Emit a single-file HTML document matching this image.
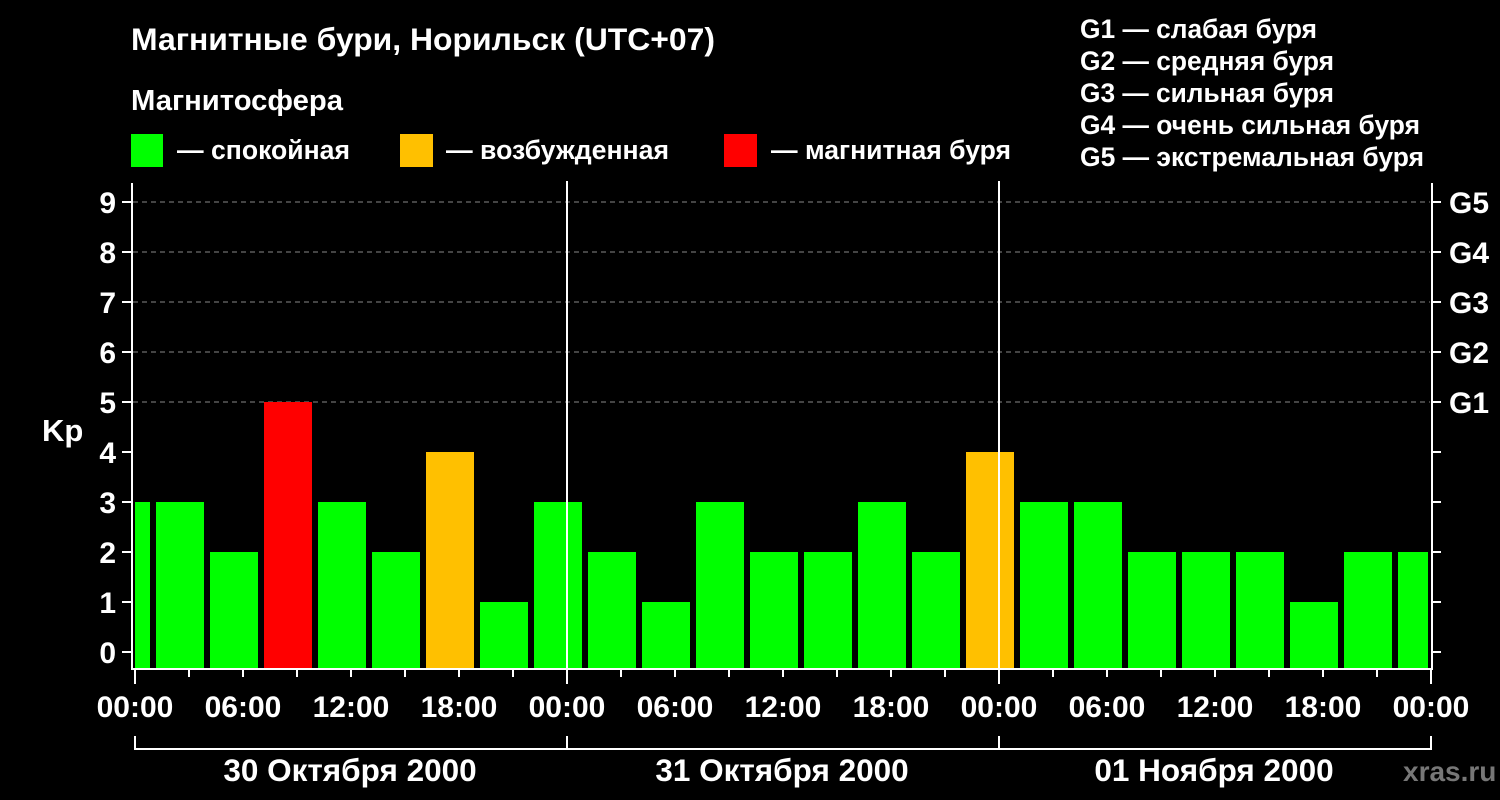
<!DOCTYPE html><html><head><meta charset="utf-8"><style>body{margin:0;background:#000}svg{display:block}text{font-family:"Liberation Sans",Arial,sans-serif;font-weight:bold;fill:#fff}</style></head><body>
<svg width="1500" height="800" xmlns="http://www.w3.org/2000/svg">
<rect width="1500" height="800" fill="#000"/>
<text x="131" y="50" font-size="31.5" textLength="584" lengthAdjust="spacingAndGlyphs">Магнитные бури, Норильск (UTC+07)</text>
<text x="131" y="110" font-size="29" textLength="212" lengthAdjust="spacingAndGlyphs">Магнитосфера</text>
<rect x="131" y="134" width="32" height="33" fill="#0f0"/><text x="177" y="159" font-size="26.5" textLength="173" lengthAdjust="spacingAndGlyphs">— спокойная</text>
<rect x="400" y="134" width="33" height="33" fill="#ffc000"/><text x="446" y="159" font-size="26.5" textLength="223" lengthAdjust="spacingAndGlyphs">— возбужденная</text>
<rect x="724" y="134" width="33" height="33" fill="#f00"/><text x="771" y="159" font-size="26.5" textLength="240" lengthAdjust="spacingAndGlyphs">— магнитная буря</text>
<g font-size="26.5"><text x="1080" y="38" textLength="237" lengthAdjust="spacingAndGlyphs">G1 — слабая буря</text><text x="1080" y="70" textLength="254" lengthAdjust="spacingAndGlyphs">G2 — средняя буря</text><text x="1080" y="102" textLength="254" lengthAdjust="spacingAndGlyphs">G3 — сильная буря</text><text x="1080" y="134" textLength="340" lengthAdjust="spacingAndGlyphs">G4 — очень сильная буря</text><text x="1080" y="166" textLength="344" lengthAdjust="spacingAndGlyphs">G5 — экстремальная буря</text></g>
<g stroke="#888" stroke-dasharray="5,4" stroke-width="1"><line x1="133" x2="1430" y1="202" y2="202"/><line x1="133" x2="1430" y1="252" y2="252"/><line x1="133" x2="1430" y1="302" y2="302"/><line x1="133" x2="1430" y1="352" y2="352"/><line x1="133" x2="1430" y1="402" y2="402"/></g>
<g fill="#0f0">
<rect x="135" y="502" width="15" height="166"/>
<rect x="156" y="502" width="48" height="166"/>
<rect x="210" y="552" width="48" height="116"/>
<rect x="264" y="402" width="48" height="266" fill="#f00"/>
<rect x="318" y="502" width="48" height="166"/>
<rect x="372" y="552" width="48" height="116"/>
<rect x="426" y="452" width="48" height="216" fill="#ffc000"/>
<rect x="480" y="602" width="48" height="66"/>
<rect x="534" y="502" width="48" height="166"/>
<rect x="588" y="552" width="48" height="116"/>
<rect x="642" y="602" width="48" height="66"/>
<rect x="696" y="502" width="48" height="166"/>
<rect x="750" y="552" width="48" height="116"/>
<rect x="804" y="552" width="48" height="116"/>
<rect x="858" y="502" width="48" height="166"/>
<rect x="912" y="552" width="48" height="116"/>
<rect x="966" y="452" width="48" height="216" fill="#ffc000"/>
<rect x="1020" y="502" width="48" height="166"/>
<rect x="1074" y="502" width="48" height="166"/>
<rect x="1128" y="552" width="48" height="116"/>
<rect x="1182" y="552" width="48" height="116"/>
<rect x="1236" y="552" width="48" height="116"/>
<rect x="1290" y="602" width="48" height="66"/>
<rect x="1344" y="552" width="48" height="116"/>
<rect x="1398" y="552" width="30" height="116"/>
</g>
<g stroke="#fff" stroke-width="2" fill="none">
<path d="M132 183V669H1432V183"/>
<line x1="567" y1="181" x2="567" y2="668"/><line x1="999" y1="181" x2="999" y2="668"/>
<path d="M122 202h10M122 252h10M122 302h10M122 352h10M122 402h10M122 452h10M122 502h10M122 552h10M122 602h10M122 652h10"/>
<path d="M1432 202h9M1432 252h9M1432 302h9M1432 352h9M1432 402h9M1432 452h9M1432 502h9M1432 552h9M1432 602h9M1432 652h9"/>
<path d="M135 668v16M567 668v16M999 668v16M1431 668v16"/>
<path d="M189 668v9M243 668v9M297 668v9M351 668v9M405 668v9M459 668v9M513 668v9M621 668v9M675 668v9M729 668v9M783 668v9M837 668v9M891 668v9M945 668v9M1053 668v9M1107 668v9M1161 668v9M1215 668v9M1269 668v9M1323 668v9M1377 668v9"/>
<path d="M135 736v13H1431V736M567 736v13M999 736v13"/>
</g>
<g font-size="30" text-anchor="end"><text x="116" y="213">9</text><text x="116" y="263">8</text><text x="116" y="313">7</text><text x="116" y="363">6</text><text x="116" y="413">5</text><text x="116" y="463">4</text><text x="116" y="513">3</text><text x="116" y="563">2</text><text x="116" y="613">1</text><text x="116" y="663">0</text></g>
<text x="42" y="441" font-size="31">Kp</text>
<g font-size="30"><text x="1449" y="213">G5</text><text x="1449" y="263">G4</text><text x="1449" y="313">G3</text><text x="1449" y="363">G2</text><text x="1449" y="413">G1</text></g>
<g font-size="30" text-anchor="middle"><text x="135" y="717">00:00</text><text x="243" y="717">06:00</text><text x="351" y="717">12:00</text><text x="459" y="717">18:00</text><text x="567" y="717">00:00</text><text x="675" y="717">06:00</text><text x="783" y="717">12:00</text><text x="891" y="717">18:00</text><text x="999" y="717">00:00</text><text x="1107" y="717">06:00</text><text x="1215" y="717">12:00</text><text x="1323" y="717">18:00</text><text x="1431" y="717">00:00</text>
<text x="350" y="781" font-size="31.5">30 Октября 2000</text><text x="782" y="781" font-size="31.5">31 Октября 2000</text><text x="1214" y="781" font-size="31.5">01 Ноября 2000</text></g>
<text x="1403" y="781" font-size="28" style="fill:#777">xras.ru</text>
</svg></body></html>
